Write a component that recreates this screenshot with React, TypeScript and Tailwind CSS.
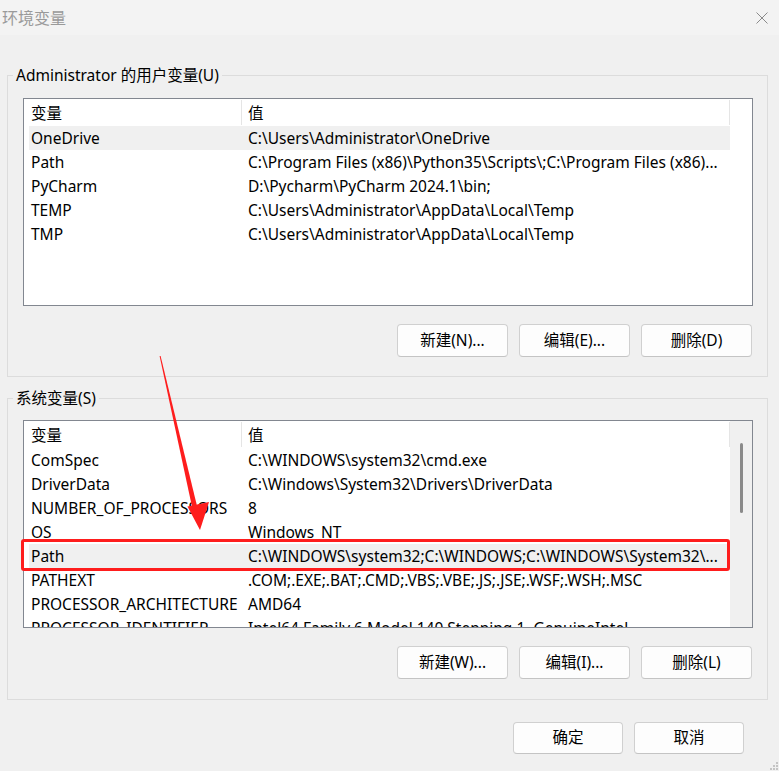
import React from "react";

type Row = { name: string; value: string; selected?: boolean };

const userRows: Row[] = [
  { name: "OneDrive", value: "C:\\Users\\Administrator\\OneDrive", selected: true },
  { name: "Path", value: "C:\\Program Files (x86)\\Python35\\Scripts\\;C:\\Program Files (x86)..." },
  { name: "PyCharm", value: "D:\\Pycharm\\PyCharm 2024.1\\bin;" },
  { name: "TEMP", value: "C:\\Users\\Administrator\\AppData\\Local\\Temp" },
  { name: "TMP", value: "C:\\Users\\Administrator\\AppData\\Local\\Temp" },
];

const sysRows: Row[] = [
  { name: "ComSpec", value: "C:\\WINDOWS\\system32\\cmd.exe" },
  { name: "DriverData", value: "C:\\Windows\\System32\\Drivers\\DriverData" },
  { name: "NUMBER_OF_PROCESSORS", value: "8" },
  { name: "OS", value: "Windows_NT" },
  { name: "Path", value: "C:\\WINDOWS\\system32;C:\\WINDOWS;C:\\WINDOWS\\System32\\...", selected: true },
  { name: "PATHEXT", value: ".COM;.EXE;.BAT;.CMD;.VBS;.VBE;.JS;.JSE;.WSF;.WSH;.MSC" },
  { name: "PROCESSOR_ARCHITECTURE", value: "AMD64" },
  { name: "PROCESSOR_IDENTIFIER", value: "Intel64 Family 6 Model 140 Stepping 1, GenuineIntel" },
];

function List({ rows, scroll }: { rows: Row[]; scroll?: boolean }) {
  return (
    <div className="h-[208px] border border-[#828790] bg-white flex overflow-hidden">
      <div className="w-[706px] flex flex-col">
        <div className="h-[27px] flex items-center shrink-0">
          <div className="w-[217px] pl-[7px] pt-[2px] h-full flex items-center">变量</div>
          <div className="w-px h-[25px] bg-[#e5e5e5]" />
          <div className="flex-1 pl-[6px] pt-[2px] h-full flex items-center">值</div>
          <div className="w-px h-[25px] bg-[#e5e5e5]" />
        </div>
        {rows.map((r, i) => (
          <div
            key={i}
            className={
              "ml-[5px] h-[24px] pt-[2px] shrink-0 flex items-center whitespace-nowrap " +
              (r.selected ? "bg-[#f0f0f0]" : "")
            }
          >
            <div className="w-[212px] pl-[2px] overflow-hidden">{r.name}</div>
            <div className="flex-1 pl-[7px] overflow-hidden">{r.value}</div>
          </div>
        ))}
      </div>
      <div className={"w-[22px] flex justify-center " + (scroll ? "bg-[#f0f0f0]" : "")}>
        {scroll && <div className="mt-[22px] w-[3px] h-[70px] rounded-full bg-[#8a8a8a]" />}
      </div>
    </div>
  );
}

function Btn({ label, w = "w-[111px]", h = "h-[33px]" }: { label: string; w?: string; h?: string }) {
  return (
    <div
      className={
        w +
        " " +
        h +
        " flex items-center justify-center rounded-[4px] border border-[#d0d0d0] border-b-[#c4c4c4] bg-[#fdfdfd]"
      }
    >
      {label}
    </div>
  );
}

export default function App() {
  return (
    <div className="relative w-[779px] h-[771px] overflow-hidden bg-[#f0f0f0] text-[15.5px] text-black font-['Noto_Sans','Noto_Sans_CJK_SC',sans-serif]">
      <div className="h-[35px] bg-[#f3f3f3] flex items-center justify-between pl-[2px] pr-[11px]">
        <span className="text-[#9a9a9a] text-[16px]">环境变量</span>
        <svg width="12" height="12" viewBox="0 0 12 12">
          <path d="M0.5 0.5 L11.5 11.5 M11.5 0.5 L0.5 11.5" stroke="#8a8a8a" strokeWidth="1" fill="none" />
        </svg>
      </div>

      <div className="pl-[7px] pr-[11px] pt-[29px]">
        <fieldset className="border border-[#dcdcdc] pl-[15px] pr-[14px] pt-[12px] pb-[19px]">
          <legend className="-ml-[10px] px-[3px] leading-[22px]">Administrator 的用户变量(U)</legend>
          <List rows={userRows} />
          <div className="flex justify-end gap-[11px] mt-[18px] pr-[1px]">
            <Btn label="新建(N)..." />
            <Btn label="编辑(E)..." />
            <Btn label="删除(D)" />
          </div>
        </fieldset>

        <fieldset className="mt-[10px] border border-[#dcdcdc] pl-[15px] pr-[14px] pt-[11px] pb-[20px]">
          <legend className="-ml-[10px] px-[3px] leading-[22px]">系统变量(S)</legend>
          <List rows={sysRows} scroll />
          <div className="flex justify-end gap-[11px] mt-[18px] pr-[1px]">
            <Btn label="新建(W)..." />
            <Btn label="编辑(I)..." />
            <Btn label="删除(L)" />
          </div>
        </fieldset>
      </div>

      <div className="flex justify-end gap-[11px] mt-[22px] pr-[35px]">
        <Btn label="确定" w="w-[110px]" h="h-[32px]" />
        <Btn label="取消" w="w-[110px]" h="h-[32px]" />
      </div>

      {/* annotation: red highlight box */}
      <div className="absolute left-[21px] top-[539px] w-[709px] h-[32px] border-[3px] border-[#fe1d1d] rounded-[3px] pointer-events-none" />

      {/* annotation: red arrow */}
      <svg className="absolute left-0 top-0 pointer-events-none" width="779" height="771" viewBox="0 0 779 771">
        <polygon points="159.6,356 160.6,356 197.5,508 192.5,509" fill="#fe1d1d" />
        <polygon points="200,530 187.5,506.5 209,502" fill="#fe1d1d" />
      </svg>

      {/* resize grip */}
      <svg className="absolute right-0 bottom-0" width="12" height="10" viewBox="0 0 12 10">
        <rect x="9" y="1" width="2" height="2" fill="#c4c4c4" />
        <rect x="6" y="4" width="2" height="2" fill="#c4c4c4" />
        <rect x="9" y="4" width="2" height="2" fill="#c4c4c4" />
        <rect x="3" y="7" width="2" height="2" fill="#c4c4c4" />
        <rect x="6" y="7" width="2" height="2" fill="#c4c4c4" />
        <rect x="9" y="7" width="2" height="2" fill="#c4c4c4" />
      </svg>
    </div>
  );
}
